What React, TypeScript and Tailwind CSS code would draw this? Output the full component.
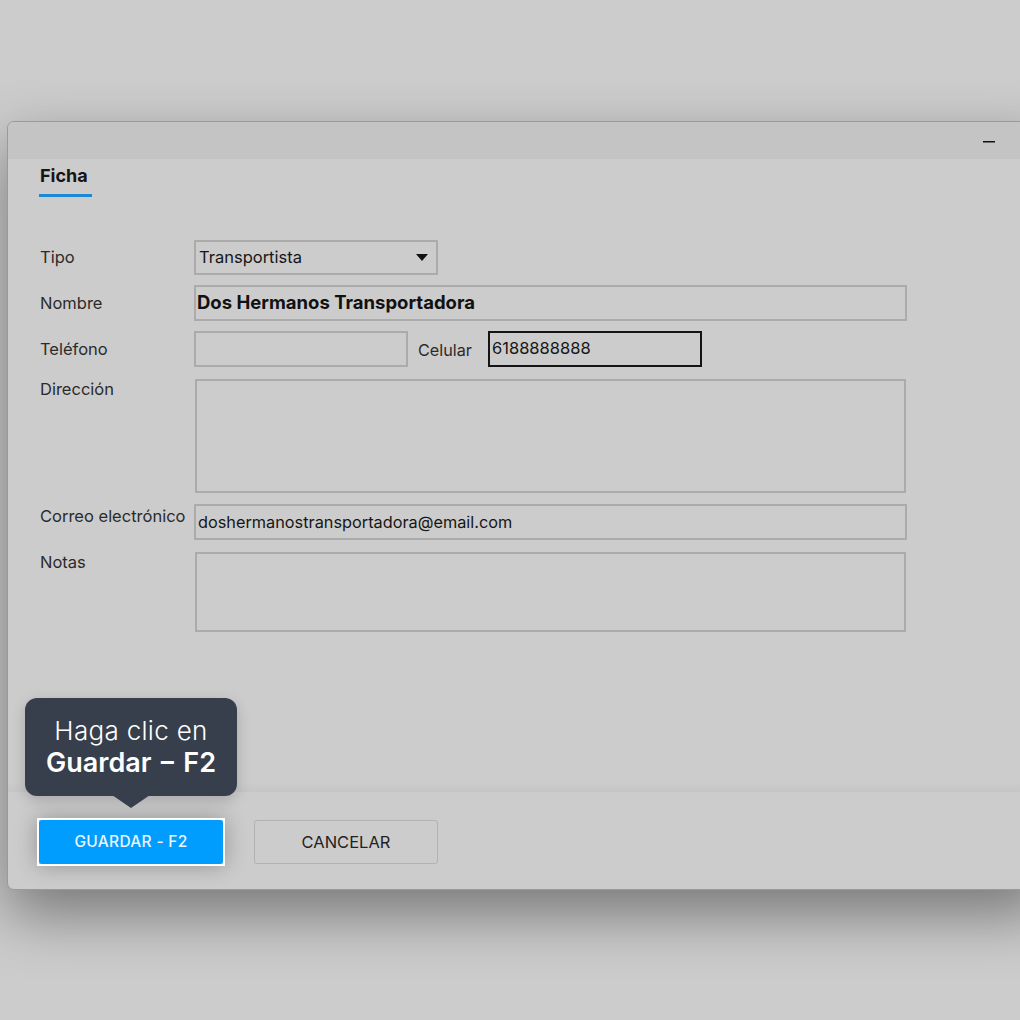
import React from "react";

const font = { fontFamily: "Inter, 'Noto Sans', 'Liberation Sans', sans-serif" };

function Label({ children, pt, w = "w-[154px]" }: { children: React.ReactNode; pt: string; w?: string }) {
  return (
    <div className={`${w} shrink-0 text-[16.5px] leading-[20px] text-[#2b2b2b] ${pt}`}>{children}</div>
  );
}

export default function App() {
  return (
    <div
      className="w-[1020px] h-[1020px] overflow-hidden bg-[#cccccc] pt-[121px] pl-[7px]"
      style={font}
    >
      <div className="relative w-[1040px] h-[769px] rounded-l-[7px] border border-[#9a9a9a] bg-[#cccccc] shadow-[0_24px_60px_rgba(0,0,0,0.42)] flex flex-col overflow-visible">
        {/* title bar */}
        <div className="h-[37px] shrink-0 bg-[#c4c4c4] rounded-tl-[7px] flex items-center">
          <div className="ml-[975px] mt-[2px]">
            <svg width="13" height="4" viewBox="0 0 13 4">
              <rect x="0" y="1" width="12" height="1.5" fill="#111" />
            </svg>
          </div>
        </div>

        {/* body */}
        <div className="flex-1 flex flex-col">
          <div className="pl-[31px] pt-[5px]">
            <div className="inline-flex flex-col">
              <div className="text-[18px] leading-[24px] font-bold text-[#151515] pl-[1px] pr-[3px]">Ficha</div>
              <div className="mt-[6px] h-[3px] w-[53px] bg-[#1c88d6]" />
            </div>
          </div>

          <div className="pl-[32px] mt-[43px] flex flex-col">
            {/* Tipo */}
            <div className="flex items-start">
              <Label pt="pt-[7px]">Tipo</Label>
              <div className="w-[244px] h-[35px] border-2 border-[#ababab] flex items-center justify-between pl-[3px] pr-[8px]">
                <span className="text-[16.5px] text-[#161616]">Transportista</span>
                <svg width="12" height="7" viewBox="0 0 12 7">
                  <path d="M0 0 L12 0 L6 7 Z" fill="#111" />
                </svg>
              </div>
            </div>

            {/* Nombre */}
            <div className="flex items-start mt-[10px]">
              <Label pt="pt-[8px]">Nombre</Label>
              <div className="w-[713px] h-[36px] border-2 border-[#ababab] flex items-center pl-[1px]">
                <span className="text-[18.5px] font-bold text-[#111]">Dos Hermanos Transportadora</span>
              </div>
            </div>

            {/* Teléfono / Celular */}
            <div className="flex items-start mt-[10px]">
              <Label pt="pt-[8px]">Teléfono</Label>
              <div className="w-[214px] h-[36px] border-2 border-[#ababab]" />
              <div className="pl-[10px] w-[80px] shrink-0 text-[16.2px] leading-[20px] text-[#2b2b2b] pt-[9px]">Celular</div>
              <div className="w-[214px] h-[36px] border-2 border-[#141414] flex items-center pl-[2px] pb-[1px]">
                <span className="text-[16.5px] text-[#161616]">6188888888</span>
              </div>
            </div>

            {/* Dirección */}
            <div className="flex items-start mt-[12px]">
              <Label pt="pt-0" w="w-[155px]">Dirección</Label>
              <div className="w-[711px] h-[114px] border-2 border-[#ababab]" />
            </div>

            {/* Correo */}
            <div className="flex items-start mt-[11px]">
              <Label pt="pt-[2px]">Correo electrónico</Label>
              <div className="w-[713px] h-[36px] border-2 border-[#ababab] flex items-center pl-[2px]">
                <span className="text-[16.3px] text-[#161616]">doshermanostransportadora@email.com</span>
              </div>
            </div>

            {/* Notas */}
            <div className="flex items-start mt-[12px]">
              <Label pt="pt-0" w="w-[155px]">Notas</Label>
              <div className="w-[711px] h-[80px] border-2 border-[#ababab]" />
            </div>
          </div>
        </div>

        {/* footer separator */}
        <div className="h-[10px] shrink-0 bg-gradient-to-b from-[#cccccc] to-[#c5c5c5]" />

        {/* footer */}
        <div className="h-[97px] shrink-0 flex items-start pl-[29px] pt-[26px] gap-[29px]">
          <div className="relative">
            {/* tooltip */}
            <div className="absolute left-[-12px] bottom-[57px] w-[212px] flex flex-col items-center">
              <div className="w-[212px] h-[98px] rounded-[12px] bg-[#373f4d] shadow-[0_4px_14px_rgba(0,0,0,0.18)] flex flex-col items-center justify-center text-white">
                <div className="text-[26px] leading-[32px] font-light tracking-[0.3px]">Haga clic en</div>
                <div className="text-[27px] leading-[32px] font-semibold">Guardar − F2</div>
              </div>
              <svg width="38" height="14" viewBox="0 0 38 14" className="-mt-[1px]">
                <path d="M0 0 L38 0 L19 13 Z" fill="#373f4d" />
              </svg>
            </div>
            <div className="border-2 border-white shadow-[0_0_22px_rgba(0,0,0,0.28)]">
              <div className="w-[184px] h-[44px] rounded-[3px] bg-[#009dff] flex items-center justify-center text-[15.5px] font-medium text-[#eaf5ff] tracking-[0.3px]">
                GUARDAR - F2
              </div>
            </div>
          </div>
          <div className="mt-[2px] w-[184px] h-[44px] rounded-[3px] border border-[#b2b2b2] flex items-center justify-center text-[16.5px] text-[#222]">
            CANCELAR
          </div>
        </div>
      </div>
    </div>
  );
}
